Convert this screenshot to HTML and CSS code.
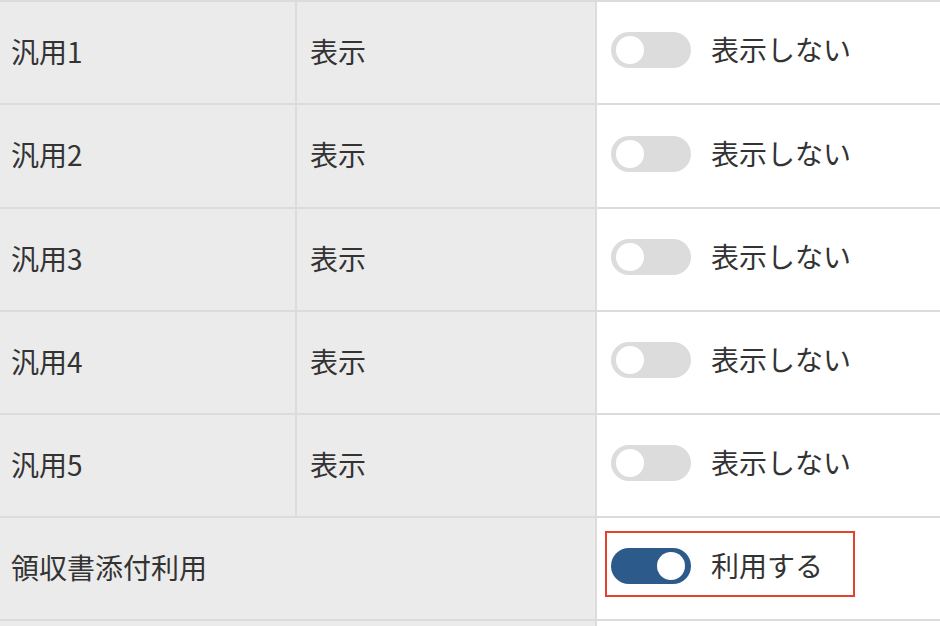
FILE: index.html
```html
<!DOCTYPE html>
<html lang="ja">
<head>
<meta charset="utf-8">
<link rel="stylesheet" href="styles.css">
</head>
<body>
<div class="grid">
  <div class="cell head">汎用1</div>
  <div class="cell sub">表示</div>
  <div class="cell val"><span class="toggle"></span><span class="label">表示しない</span></div>

  <div class="cell head">汎用2</div>
  <div class="cell sub">表示</div>
  <div class="cell val"><span class="toggle"></span><span class="label">表示しない</span></div>

  <div class="cell head">汎用3</div>
  <div class="cell sub">表示</div>
  <div class="cell val"><span class="toggle"></span><span class="label">表示しない</span></div>

  <div class="cell head">汎用4</div>
  <div class="cell sub">表示</div>
  <div class="cell val"><span class="toggle"></span><span class="label">表示しない</span></div>

  <div class="cell head">汎用5</div>
  <div class="cell sub">表示</div>
  <div class="cell val"><span class="toggle"></span><span class="label">表示しない</span></div>

  <div class="cell head wide">領収書添付利用</div>
  <div class="cell val marked"><span class="toggle on"></span><span class="label">利用する</span><span class="highlight"></span></div>

  <div class="cell head wide stub"></div>
  <div class="cell val stub"></div>
</div>
</body>
</html>
```

FILE: styles.css
```css
html, body {
  margin: 0;
  padding: 0;
  background: #ffffff;
}
body {
  width: 940px;
  height: 626px;
  overflow: hidden;
  font-family: "Noto Sans CJK JP", "Noto Sans", sans-serif;
  color: #333333;
}
.grid {
  display: grid;
  grid-template-columns: 295px 298px 1fr;
  grid-template-rows: 101px 102px 101px 101px 101px 101px 5px;
  gap: 2px;
  padding-top: 2px;
  background: #dcdcdc;
}
.cell {
  display: flex;
  align-items: center;
  font-size: 28px;
  line-height: 1;
  padding-bottom: 4px;
  box-sizing: border-box;
}
.head {
  background: #ebebeb;
  padding-left: 11px;
}
.sub {
  background: #ebebeb;
  padding-left: 13px;
}
.wide {
  grid-column: 1 / span 2;
}
.val {
  background: #ffffff;
  padding-left: 14px;
  padding-bottom: 5px;
  gap: 20px;
}
.stub {
  padding: 0;
}
.marked {
  position: relative;
  padding-bottom: 6px;
  padding-top: 0;
}
.toggle {
  position: relative;
  width: 80px;
  height: 36px;
  border-radius: 18px;
  background: #dcdcdc;
  flex: none;
}
.toggle::after {
  content: "";
  position: absolute;
  top: 4px;
  left: 5px;
  width: 28px;
  height: 28px;
  border-radius: 50%;
  background: #ffffff;
}
.toggle.on {
  background: #2c5a8b;
}
.toggle.on::after {
  left: 46px;
}
.label {
  padding-bottom: 2px;
}
.highlight {
  position: absolute;
  left: 8px;
  top: 13px;
  width: 250px;
  height: 66px;
  border: 2px solid #e5412b;
  box-sizing: border-box;
}
```
